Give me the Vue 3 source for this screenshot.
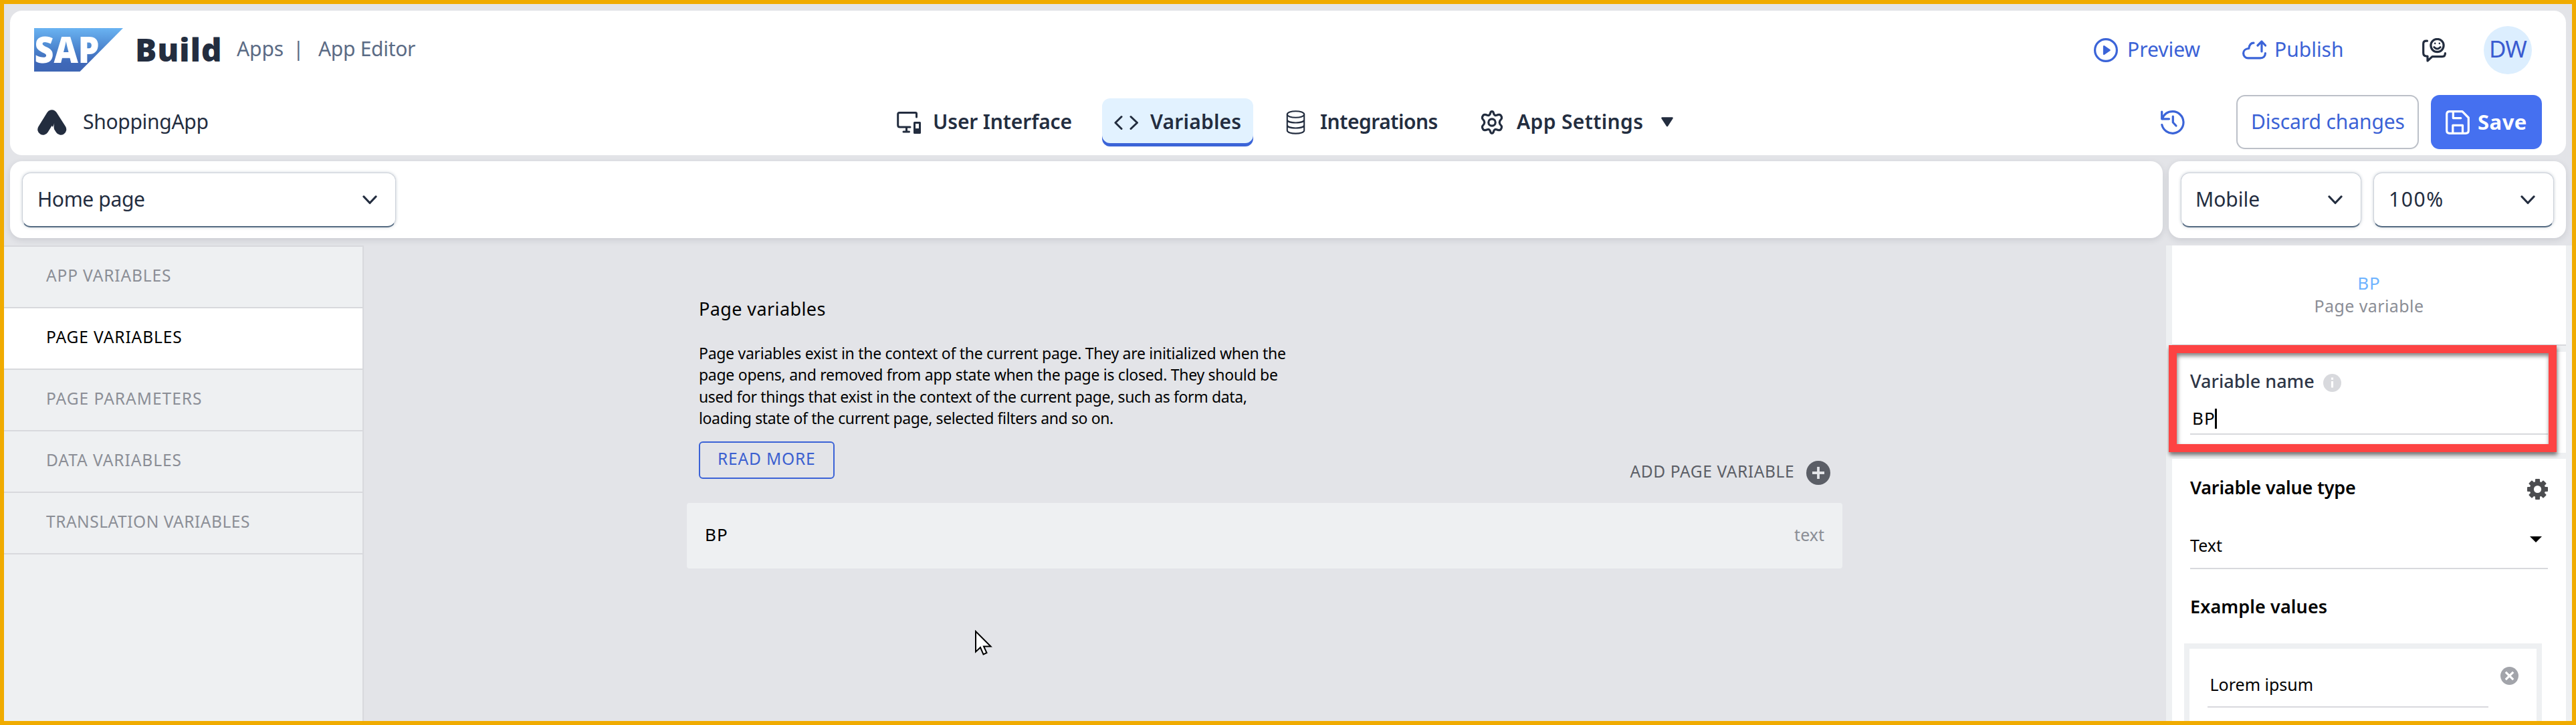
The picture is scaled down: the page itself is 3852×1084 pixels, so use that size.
<script setup>
const sidebar = [
  { label: 'APP VARIABLES', ls: 0.86 },
  { label: 'PAGE VARIABLES', ls: 0.9, active: true },
  { label: 'PAGE PARAMETERS', ls: 1.0 },
  { label: 'DATA VARIABLES', ls: 0.95 },
  { label: 'TRANSLATION VARIABLES', ls: 0.53 }
]
</script>

<template>
  <div class="app">
    <header class="header">
      <div class="row brand-row">
        <svg class="logo" viewBox="0 0 133 65">
          <defs>
            <linearGradient id="sapg" x1="0" y1="0" x2="0" y2="1">
              <stop offset="0" stop-color="#6ab3f2" />
              <stop offset="0.5" stop-color="#4a82cc" />
              <stop offset="0.8" stop-color="#3f68b8" />
              <stop offset="1" stop-color="#3e66b4" />
            </linearGradient>
          </defs>
          <path d="M0 0H133L68.500 65H0Z" fill="url(#sapg)" />
          <text x="0.500" y="52" textLength="97" lengthAdjust="spacingAndGlyphs" class="logo-text">SAP</text>
        </svg>
        <span class="build">Build</span>
        <span class="crumb apps">Apps</span>
        <span class="crumb bar">|</span>
        <span class="crumb editor">App Editor</span>
        <div class="top-actions">
          <svg class="i36 blue" viewBox="0 0 36 36">
            <circle cx="18" cy="18" r="16.400" fill="none" stroke="currentColor" stroke-width="3.200" />
            <path d="M15.200 12.200L23.500 18L15.200 23.800Z" fill="currentColor" stroke="currentColor" stroke-width="2.600" stroke-linejoin="round" />
          </svg>
          <span class="action preview">Preview</span>
          <svg class="i36 blue" viewBox="0 0 36 36" fill="none" stroke="currentColor" stroke-width="3.200" stroke-linecap="round" stroke-linejoin="round">
            <path d="M17 7.200C12.500 7.200 10.500 10.500 9.800 15.500C5 15.800 1.600 18.500 1.600 22.600C1.600 26.500 4.500 29.900 8.500 29.900H27C31.500 29.900 34.400 27 34.400 22.500" />
            <path d="M29 20V5.500M23 11L29 5L34.600 11" />
          </svg>
          <span class="action publish">Publish</span>
          <svg class="i36 dark" viewBox="0 0 36 36" fill="none" stroke="currentColor" stroke-width="3.200" stroke-linecap="round" stroke-linejoin="round">
            <path d="M7.500 4.200H6Q1.700 4.200 1.700 8.500V22Q1.700 26.600 6 27H8V34L15 27.600H30Q34.400 27.600 34.400 22.500" />
            <circle cx="22.500" cy="11" r="9.600" />
            <path d="M17.800 13.500Q22.500 18.500 27.200 13.500" stroke-width="3" />
            <path d="M19.200 7.800V8M25.800 7.800V8" stroke-width="2.400" />
          </svg>
          <div class="avatar"><span>DW</span></div>
        </div>
      </div>

      <div class="row nav-row">
        <div class="project">
          <svg class="a-icon" viewBox="0 0 44 38">
            <path d="M8.500 29.500L21.500 8.500L35 29.500" fill="none" stroke="#232d3f" stroke-width="16.500" stroke-linecap="round" stroke-linejoin="round" />
            <path d="M17 38L24 23.500Q26 18 24.800 22Q23.500 30 28.500 38Z" fill="#fff" />
          </svg>
          <span class="project-name">ShoppingApp</span>
        </div>
        <nav class="tabs">
          <div class="tab ui">
            <svg class="i36" viewBox="0 0 36 36" fill="none" stroke="currentColor" stroke-width="3" stroke-linecap="round" stroke-linejoin="round">
              <path d="M29.500 10V5Q29.500 3.500 28 3.500H4Q1.700 3.500 1.700 6V22Q1.700 25 4.500 25H20M14.500 25V31M10 32H18.500" />
              <rect x="26.500" y="18.500" width="8" height="15" stroke-width="3" />
              <path d="M27 28.500H34V33H27Z" fill="currentColor" />
            </svg>
            <span>User Interface</span>
          </div>
          <div class="tab vars active">
            <svg class="i36" viewBox="0 0 36 36" fill="none" stroke="currentColor" stroke-width="3" stroke-linecap="round" stroke-linejoin="round">
              <path d="M11 9.500L1.900 18.500L11 27.500M25 9.500L34.500 18.500L25 27.500" />
            </svg>
            <span>Variables</span>
          </div>
          <div class="tab ints">
            <svg class="i36" viewBox="0 0 36 36" fill="none" stroke="currentColor" stroke-width="2.100">
              <ellipse cx="17.500" cy="6" rx="12.700" ry="4.800" />
              <path d="M4.800 6V30C4.800 36.200 30.200 36.200 30.200 30V6M4.800 14C4.800 20 30.200 20 30.200 14M4.800 22C4.800 28 30.200 28 30.200 22" />
            </svg>
            <span>Integrations</span>
          </div>
          <div class="tab sets">
            <svg class="i36" viewBox="0 0 36 36" fill="none" stroke="currentColor" stroke-width="3.200" stroke-linejoin="round">
              <path d="M14.500 4.500Q15 1.700 17 1.700Q19 1.700 19.500 4.500Q20.500 8.500 24 7.300Q28 5.500 30 7.200Q32.500 10.500 31 12.800Q28.200 15.500 28.200 18Q28.200 20.500 31 23.200Q32.500 25.500 30 28.800Q28 30.500 24 28.700Q20.500 27.500 19.500 31.500Q19 34.300 17 34.300Q15 34.300 14.500 31.500Q13.500 27.500 10 28.700Q6 30.500 4 28.800Q1.500 25.500 3 23.200Q5.800 20.500 5.800 18Q5.800 15.500 3 12.800Q1.500 10.500 4 7.200Q6 5.500 10 7.300Q13.500 8.500 14.500 4.500Z" />
              <circle cx="17" cy="18" r="5.200" />
            </svg>
            <span class="set-label">App Settings</span>
            <svg class="tri" viewBox="0 0 18 15"><path d="M1.500 1.500H16.500L9 13Z" fill="currentColor" stroke="currentColor" stroke-width="2.500" stroke-linejoin="round" /></svg>
          </div>
        </nav>
        <div class="save-actions">
          <svg class="i36 blue history" viewBox="0 0 36 36" fill="none" stroke="currentColor" stroke-width="3.200" stroke-linecap="round" stroke-linejoin="round">
            <path d="M2.500 12.500C5 5.500 11 1.700 18 1.700A16.300 16.300 0 1 1 1.800 21.500" />
            <path d="M1.700 2V12.800H12.500M18.300 9V18L23 23" />
          </svg>
          <div class="discard"><span>Discard changes</span></div>
          <div class="save">
            <svg class="i36" viewBox="0 0 36 36" fill="none" stroke="#fff" stroke-width="3.200" stroke-linecap="round" stroke-linejoin="round">
              <path d="M6 1.700H25L34.300 11V30Q34.300 34.300 30 34.300H6Q1.700 34.300 1.700 30V6Q1.700 1.700 6 1.700Z" />
              <path d="M11.300 2V11.600H22.800M10.800 34V22.300H25.500V34" />
            </svg>
            <span>Save</span>
          </div>
        </div>
      </div>
    </header>

    <div class="toolbars">
      <div class="panel page-panel">
        <div class="select page-select">
          <span>Home page</span>
          <svg class="chev" viewBox="0 0 22 14"><path d="M2 2L11 11.500L20 2" /></svg>
        </div>
      </div>
      <div class="panel view-panel">
        <div class="select">
          <span>Mobile</span>
          <svg class="chev" viewBox="0 0 22 14"><path d="M2 2L11 11.500L20 2" /></svg>
        </div>
        <div class="select zoom">
          <span>100%</span>
          <svg class="chev" viewBox="0 0 22 14"><path d="M2 2L11 11.500L20 2" /></svg>
        </div>
      </div>
    </div>

    <main class="main">
      <aside class="sidebar">
        <div v-for="s in sidebar" :key="s.label" class="side-item" :class="{ on: s.active }">
          <span :style="{ letterSpacing: s.ls + 'px' }">{{ s.label }}</span>
        </div>
      </aside>

      <section class="canvas">
        <h1 class="title">Page variables</h1>
        <p class="desc">
          <span>Page variables exist in the context of the current page. They are initialized when the</span>
          <span>page opens, and removed from app state when the page is closed. They should be</span>
          <span class="tight">used for things that exist in the context of the current page, such as form data,</span>
          <span class="tight">loading state of the current page, selected filters and so on.</span>
        </p>
        <div class="mid">
          <div class="read-more"><span>READ MORE</span></div>
          <div class="add">
            <span>ADD PAGE VARIABLE</span>
            <svg class="plus" viewBox="0 0 36 36"><circle cx="18" cy="18" r="18" fill="#5b5e66" /><path d="M18 9V27M9 18H27" stroke="#e3e4e8" stroke-width="3.800" /></svg>
          </div>
        </div>
        <div class="var-card">
          <span class="var-name">BP</span>
          <span class="var-type">text</span>
        </div>
      </section>

      <aside class="props">
        <div class="card heading">
          <div class="h-name">BP</div>
          <div class="h-kind">Page variable</div>
        </div>
        <div class="card name-card">
          <div class="label-row">
            <span class="label name-label">Variable name</span>
            <svg class="info" viewBox="0 0 27 27"><circle cx="13.500" cy="13.500" r="13.500" fill="#d8d9dd" /><path d="M13.500 11V20.500M13.500 5.500V8.800" stroke="#fff" stroke-width="3.200" /></svg>
          </div>
          <div class="input"><span>BP</span><i class="caret"></i></div>
        </div>
        <div class="card type-card">
          <div class="type-head">
            <span class="label type-label">Variable value type</span>
            <svg class="gear" viewBox="0 0 31 31">
              <g fill="#4c4d50">
                <rect v-for="a in [0, 45, 90, 135]" :key="a" x="12" y="0" width="7" height="31" rx="1" :transform="`rotate(${a} 15.5 15.5)`" />
                <circle cx="15.500" cy="15.500" r="11.800" />
              </g>
              <circle cx="15.500" cy="15.500" r="5.600" fill="#fff" />
            </svg>
          </div>
          <div class="dropdown">
            <span>Text</span>
            <svg class="down" viewBox="0 0 18 9"><path d="M0 0H18L9 9Z" fill="#000" /></svg>
          </div>
          <div class="label ex-label">Example values</div>
          <div class="example">
            <div class="ex-value">Lorem ipsum</div>
            <svg class="remove" viewBox="0 0 27 27"><circle cx="13.500" cy="13.500" r="13.500" fill="#a2a4aa" /><path d="M7.800 7.800L19.200 19.200M19.200 7.800L7.800 19.200" stroke="#fff" stroke-width="3.200" /></svg>
          </div>
        </div>
        <div class="highlight"></div>
      </aside>
    </main>

    <svg class="cursor" viewBox="0 0 27 38"><path d="M1 2V32.500L8 26L12.500 36.500L17.500 34L13 24.500H23.500Z" fill="#fff" stroke="#000" stroke-width="2" /></svg>
  </div>
</template>

<style>
body { margin: 0; overflow: hidden; }
</style>

<style scoped>
.app { position: relative; box-sizing: border-box; width: 3852px; height: 1084px; border: 6px solid #f0ab00; background: #e3e4e8; display: flex; flex-direction: column; overflow: hidden; font-family: "Noto Sans", "Open Sans", sans-serif; color: #232d3f; white-space: nowrap; }
.app * { box-sizing: border-box; }
svg { display: block; flex: none; }
span { display: block; flex: none; }

.header { margin: 10px 9px 0; height: 216px; background: #fff; border-radius: 18px; flex: none; }
.row { display: flex; align-items: center; padding-bottom: 1px; }
.brand-row { height: 118px; padding-left: 36px; padding-right: 51px; }
.nav-row { height: 98px; padding-right: 36px; }
.i36 { width: 36px; height: 36px; }
.blue { color: #3b64d8; }
.dark { color: #232d3f; }

.logo { width: 133px; height: 65px; overflow: visible; }
.logo-text { font-weight: 900; font-size: 54px; fill: #fff; }
.build { margin-left: 18px; width: 152px; font-weight: 900; font-size: 48px; line-height: 60px; letter-spacing: 0.800px; padding-bottom: 2px; }
.crumb { font-size: 30px; line-height: 40px; padding-bottom: 3px; color: #5b6b85; }
.apps { width: 84px; letter-spacing: -0.120px; }
.bar { width: 38px; }
.editor { letter-spacing: -0.300px; }
.top-actions { margin-left: auto; display: flex; align-items: center; height: 72px; }
.action { font-size: 30px; line-height: 40px; padding-bottom: 2px; color: #3b62d6; }
.preview { margin-left: 14px; width: 172px; }
.publish { margin-left: 12px; width: 221px; }
.avatar { margin-left: 56px; width: 72px; height: 72px; border-radius: 50%; background: #dceefe; color: #3a5bd0; display: flex; align-items: center; justify-content: center; font-size: 35px; line-height: 44px; letter-spacing: -1px; padding-bottom: 3px; }

.project { width: 1308px; padding-left: 41px; display: flex; align-items: center; }
.a-icon { width: 44px; height: 38px; }
.project-name { margin-left: 24px; font-size: 30px; line-height: 40px; padding-bottom: 1px; letter-spacing: -0.290px; }
.tabs { display: flex; gap: 28px; }
.tab { display: flex; align-items: center; height: 72px; padding: 0 18px; gap: 18px; border-radius: 12px; font-size: 30px; font-weight: 600; line-height: 40px; }
.tab span { padding-bottom: 1px; }
.ui { width: 297px; letter-spacing: -0.140px; }
.vars { width: 226px; letter-spacing: 0.200px; }
.ints { width: 266px; letter-spacing: -0.500px; }
.sets { letter-spacing: 0.350px; }
.set-label { width: 198px; }
.tri { width: 18px; height: 15px; }
.active { background: #e2f2ff; box-shadow: inset 0 -5px 0 #3b64d8; }
.save-actions { margin-left: auto; display: flex; align-items: center; }
.history { margin-right: 77px; }
.discard { width: 273px; height: 81px; border: 2px solid #bcc0c8; border-radius: 13px; display: flex; align-items: center; padding-left: 20px; padding-bottom: 1px; font-size: 30px; line-height: 40px; letter-spacing: -0.100px; color: #3b62d6; }
.save { margin-left: 18px; width: 166px; height: 81px; border-radius: 13px; background: #4570f0; color: #fff; display: flex; align-items: center; padding-left: 22px; font-size: 31px; line-height: 40px; font-weight: 700; letter-spacing: 0.500px; }
.save span { margin-left: 12px; padding-bottom: 2px; }

.toolbars { margin: 9px 9px 0; height: 115px; display: flex; gap: 9px; flex: none; }
.panel { background: #fff; border-radius: 18px; box-shadow: 0 3px 10px rgba(60, 65, 75, 0.140); padding: 17px 18px; display: flex; gap: 18px; }
.page-panel { flex: 1; }
.view-panel { width: 594px; }
.select { width: 270px; height: 82px; border-radius: 13px; background: #fff; border: 1px solid #ccd1d9; border-bottom: 2px solid #556b82; box-shadow: 0 0 4px rgba(85, 107, 130, 0.350); display: flex; align-items: center; justify-content: space-between; padding: 0 27px 0 21px; font-size: 30px; line-height: 40px; }
.select span { padding-bottom: 1px; }
.page-select { width: 559px; letter-spacing: -0.360px; padding-left: 22px; }
.zoom { letter-spacing: 1.600px; padding-left: 22px; }
.chev { width: 22px; height: 14px; fill: none; stroke: #232d3f; stroke-width: 3.200; stroke-linecap: round; stroke-linejoin: round; }

.main { margin-top: 11px; height: 711px; display: flex; flex: none; }
.sidebar { width: 538px; background: #eef0f2; border-top: 2px solid #d8d9dd; border-right: 2px solid #d8d9dd; flex: none; }
.side-item { height: 92px; border-bottom: 2px solid #d8d9dd; display: flex; align-items: center; padding: 0 0 4px 63px; font-size: 24.500px; line-height: 34px; color: #8b8e96; }
.on { background: #fff; color: #000; }

.canvas { flex: 1; padding: 75px 484px 0 483px; color: #000; }
.title { margin: 0; padding-left: 18px; font-size: 27px; font-weight: 400; line-height: 40px; letter-spacing: 0.400px; }
.desc { margin: 30px 0 0; padding-left: 18px; font-size: 23px; line-height: 32.300px; height: 148px; letter-spacing: -0.280px; }
.tight { letter-spacing: -0.370px; }
.mid { height: 92px; display: flex; justify-content: space-between; align-items: flex-start; padding: 0 18px; }
.read-more { width: 203px; height: 56px; border: 2px solid #3b62d6; border-radius: 6px; color: #3b5fd0; display: flex; align-items: center; padding: 0 0 5px 26px; font-size: 24.500px; line-height: 34px; letter-spacing: 0.830px; }
.add { margin-top: 25px; display: flex; align-items: flex-start; color: #5b5e66; font-size: 24.500px; line-height: 40px; letter-spacing: 0.610px; }
.add span { width: 263.500px; }
.plus { width: 36px; height: 36px; margin-top: 4px; }
.var-card { height: 98px; border-radius: 4px; background: #eef0f2; display: flex; align-items: center; justify-content: space-between; padding: 0 27px 4px; font-size: 25px; line-height: 34px; }
.var-name { font-size: 26px; letter-spacing: 1.200px; }
.var-type { color: #8b8e96; }

.props { position: relative; width: 607px; background: #eef0f2; padding: 0 9px; display: flex; flex-direction: column; gap: 9px; overflow: hidden; flex: none; }
.card { background: #fff; padding: 23px 27px 0; color: #000; flex: none; }
.heading { height: 150px; padding-top: 39px; border-bottom: 2px solid #d8d9dd; text-align: center; font-size: 25px; line-height: 34px; }
.h-name { color: #6eb3ff; font-size: 26px; letter-spacing: 1px; }
.h-kind { color: #8b8e96; letter-spacing: 0.420px; }
.name-card { height: 151px; }
.label { font-size: 27px; line-height: 40px; }
.label-row { display: flex; align-items: center; height: 40px; }
.name-label { width: 199px; font-weight: 500; color: #2e3647; padding-top: 1px; }
.info { width: 27px; height: 27px; margin-top: 7px; }
.input { margin-top: 18px; height: 43px; border-bottom: 2px solid #d8d9dd; padding-left: 3px; display: flex; font-size: 26px; line-height: 36px; letter-spacing: 1px; }
.caret { width: 3px; height: 30px; margin-top: 4px; margin-left: -1px; background: #000; }
.type-card { height: 392px; }
.type-head { display: flex; justify-content: space-between; align-items: center; height: 40px; width: 535px; }
.type-label { font-weight: 600; letter-spacing: -0.210px; }
.gear { width: 31px; height: 31px; margin-top: 4px; }
.dropdown { margin-top: 48px; height: 54px; border-bottom: 2px solid #d8d9dd; display: flex; justify-content: space-between; padding-right: 9px; font-size: 25px; line-height: 36px; }
.down { width: 18px; height: 9px; margin-top: 5px; }
.ex-label { margin-top: 36px; font-weight: 600; letter-spacing: 0.100px; }
.example { margin: 35px 0 0 -9px; width: 535px; height: 160px; border: 8px solid #eef0f2; display: flex; padding-left: 27px; }
.ex-value { margin-top: 35px; width: 420px; height: 53px; border-bottom: 2px solid #d8d9dd; padding-left: 3.500px; font-size: 25px; line-height: 36px; }
.remove { width: 27px; height: 27px; margin: 27px 0 0 18px; }
.highlight { position: absolute; left: 4px; top: 149px; width: 580px; height: 160px; border: 12px solid #fd4343; box-shadow: 1px 4px 6px rgba(0, 0, 0, 0.550), inset 1px 4px 6px rgba(0, 0, 0, 0.500); }

.cursor { position: absolute; left: 1452px; top: 936px; width: 27px; height: 38px; }
</style>
